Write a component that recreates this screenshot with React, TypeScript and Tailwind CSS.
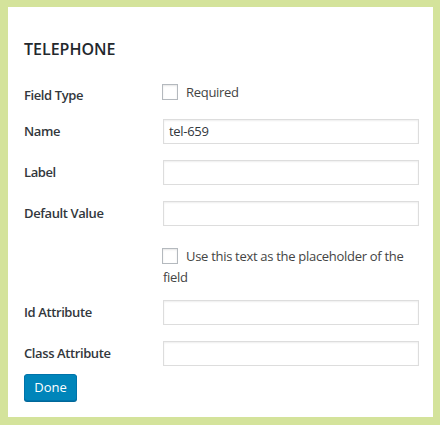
import React from "react";

const font = { fontFamily: '"Open Sans", "Noto Sans", sans-serif' };

function Field({ label, value }: { label: string; value?: string }) {
  return (
    <div className="flex items-center h-[25px]">
      <div className="w-[139px] shrink-0 text-[13px] font-semibold tracking-[-0.4px] text-[#32373c]">{label}</div>
      <div className="flex-1 h-[25px] border border-[#ddd] bg-white shadow-[inset_0_1px_2px_rgba(0,0,0,0.07)] flex items-center px-[5px] text-[13px] tracking-[-0.3px] text-[#32373c]">
        {value}
      </div>
    </div>
  );
}

function Box() {
  return (
    <span className="inline-block align-middle w-4 h-4 border border-[#b4b9be] bg-white shadow-[inset_0_1px_2px_rgba(0,0,0,0.1)] -ml-px mr-2 -mt-[3px]" />
  );
}

export default function App() {
  return (
    <div style={font} className="w-[440px] h-[425px] bg-[#d4e39b] pt-[7px] pl-[8px] pr-[7px] pb-[8px]">
      <div className="bg-white h-full pl-4 pr-[14px] pt-[30px]">
        <h2 className="text-[16px] leading-[24px] font-semibold text-[#23282d]">TELEPHONE</h2>
        <div className="mt-[19px] flex items-center h-6">
          <div className="w-[139px] shrink-0 text-[13px] font-semibold tracking-[-0.4px] text-[#32373c] mt-2">Field Type</div>
          <div className="text-[13px] tracking-[-0.3px] text-[#444] leading-[21px]">
            <Box />
            Required
          </div>
        </div>
        <div className="mt-[15px] flex flex-col gap-4">
          <Field label="Name" value="tel-659" />
          <Field label="Label" />
          <Field label="Default Value" />
        </div>
        <div className="mt-5 flex">
          <div className="w-[139px] shrink-0" />
          <div className="flex-1 text-[13px] tracking-[-0.3px] leading-[21px] text-[#444]">
            <Box />
            Use this text as the placeholder of the field
          </div>
        </div>
        <div className="mt-3 flex flex-col gap-4">
          <Field label="Id Attribute" />
          <Field label="Class Attribute" />
        </div>
        <button className="mt-2 h-[27px] w-[53px] rounded-[3px] bg-[#0085ba] border border-[#0073aa] shadow-[0_1px_0_#006799] text-white text-[13px] leading-none">
          Done
        </button>
      </div>
    </div>
  );
}
